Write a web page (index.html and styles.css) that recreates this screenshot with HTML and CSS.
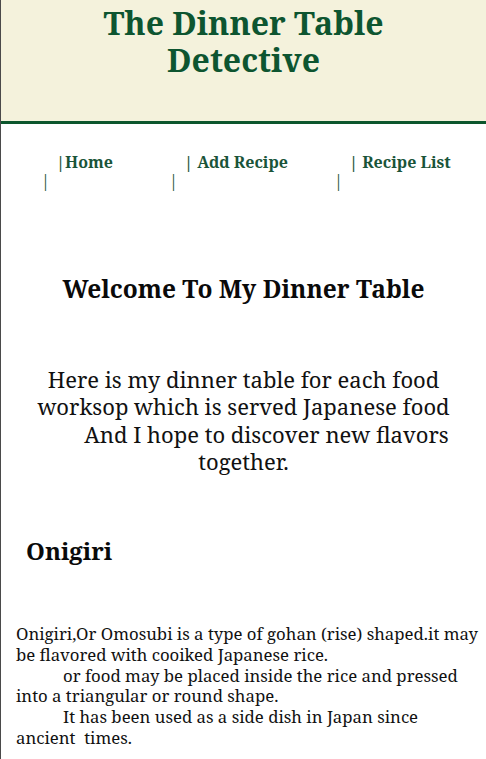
FILE: index.html
```html
<!DOCTYPE html>
<html lang="en">
<head>
<meta charset="utf-8">
<title>The Dinner Table Detective</title>
<link rel="stylesheet" href="styles.css">
</head>
<body>
<header class="site-header">
  <h1 class="site-title">The Dinner Table<br>Detective</h1>
</header>
<nav class="site-nav">
  <a class="nav-link" href="#"><span class="nav-main">|Home</span><span class="nav-bar">|</span></a>
  <a class="nav-link" href="#"><span class="nav-main">| Add Recipe</span><span class="nav-bar">|</span></a>
  <a class="nav-link" href="#"><span class="nav-main">| Recipe List</span><span class="nav-bar">|</span></a>
</nav>
<main class="content">
  <h2 class="welcome">Welcome To My Dinner Table</h2>
  <p class="intro">Here is my dinner table for each food<br>worksop which is served Japanese food<br><span class="lead"></span>And I hope to discover new flavors<br>together.</p>
  <h3 class="recipe-title">Onigiri</h3>
  <p class="recipe-text">Onigiri,Or Omosubi is a type of gohan (rise) shaped.it may<br>be flavored with cooiked Japanese rice.<br><span class="tab"></span>or food may be placed inside the rice and pressed<br>into a triangular or round shape.<br><span class="tab"></span>It has been used as a side dish in Japan since<br>ancient&nbsp; times.</p>
</main>
</body>
</html>
```
FILE: styles.css
```css
html, body {
  margin: 0;
  padding: 0;
  background: #ffffff;
}

body {
  border-left: 1px solid #4a4a4a;
  min-height: 759px;
  box-sizing: border-box;
  font-family: "Noto Serif", "DejaVu Serif", serif;
  color: #111111;
}

.site-header {
  background: #f4f2dc;
  height: 124px;
  box-sizing: border-box;
  padding-top: 4px;
  border-bottom: 3px solid #0c562d;
}

.site-title {
  margin: 0;
  text-align: center;
  font-size: 32px;
  font-weight: 700;
  line-height: 37px;
  color: #0d5530;
}

.site-nav {
  display: grid;
  grid-template-columns: 128px 165px auto;
  padding-left: 40px;
  margin-top: 29px;
}

.nav-link {
  display: flex;
  flex-direction: column;
  align-items: flex-start;
  text-decoration: none;
  color: #1a5439;
  font-size: 16px;
  font-weight: 700;
  line-height: 19px;
}

.nav-main {
  padding-left: 15px;
  white-space: nowrap;
}

.nav-bar {
  font-weight: 400;
}

.content {
  display: block;
}

.welcome {
  margin: 83px 0 0;
  text-align: center;
  font-size: 24.5px;
  line-height: 30px;
  font-weight: 700;
  color: #0a0a0a;
}

.intro {
  margin: 62px 0 0;
  text-align: center;
  font-size: 22px;
  line-height: 27.3px;
  white-space: nowrap;
}

.lead {
  display: inline-block;
  width: 46px;
}

.recipe-title {
  margin: 61px 0 0;
  padding-left: 25px;
  font-size: 24px;
  line-height: 30px;
  font-weight: 700;
  color: #0a0a0a;
}

.recipe-text {
  margin: 58px 0 0;
  padding-left: 15px;
  font-size: 16.75px;
  line-height: 20.7px;
  white-space: nowrap;
}

.tab {
  display: inline-block;
  width: 47px;
}
```
